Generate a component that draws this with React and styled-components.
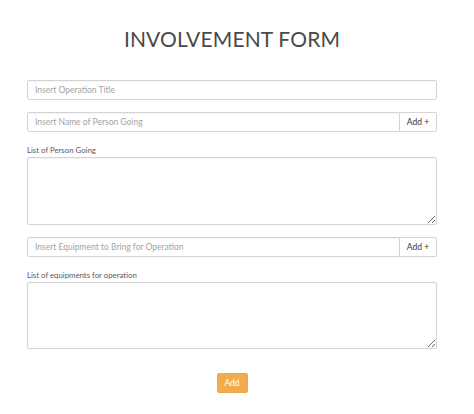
import React from "react";
import styled, { createGlobalStyle } from "styled-components";

const GlobalStyle = createGlobalStyle`
  body {
    margin: 0;
    background: #ffffff;
    font-family: Lato, "Open Sans", sans-serif;
  }
`;

const Page = styled.div`
  width: 410px;
  padding: 0 37px 0 27px;
  display: flex;
  flex-direction: column;
`;

const Title = styled.h1`
  margin: 26px 0 28px;
  text-align: center;
  font-family: Lato, sans-serif;
  font-weight: 400;
  font-size: 21px;
  line-height: 26px;
  color: #4a4a4a;
  letter-spacing: 0.15px;
`;

const Field = styled.input`
  box-sizing: border-box;
  width: 100%;
  height: 20px;
  padding: 0 7px;
  border: 1px solid #d4d4d4;
  border-radius: 2px;
  font-family: Lato, sans-serif;
  font-size: 8.5px;
  color: #555;
  outline: none;
  box-shadow: inset 0 1px 1px rgba(0, 0, 0, 0.04);

  &::placeholder {
    color: #a3a3a3;
  }
`;

const Group = styled.div`
  display: flex;
  margin-top: ${p => p.$top || 0}px;
`;

const GroupField = styled(Field)`
  flex: 1;
  min-width: 0;
  border-radius: 2px 0 0 2px;
`;

const AddonButton = styled.button`
  box-sizing: border-box;
  height: 20px;
  width: 37px;
  padding: 0;
  border: 1px solid #d4d4d4;
  border-left: none;
  border-radius: 0 2px 2px 0;
  background: #ffffff;
  font-family: Lato, sans-serif;
  font-size: 8.5px;
  color: #333;
`;

const Label = styled.label`
  display: block;
  margin: 13px 0 2px;
  font-family: Lato, sans-serif;
  font-size: 7.8px;
  line-height: 10px;
  color: #5a5a5a;
`;

const Area = styled.textarea`
  box-sizing: border-box;
  width: 100%;
  height: 67.5px;
  margin: 0;
  display: block;
  border: 1px solid #d4d4d4;
  border-radius: 2px;
  outline: none;
  font-family: Lato, sans-serif;
  font-size: 8.5px;
  box-shadow: inset 0 1px 1px rgba(0, 0, 0, 0.04);
`;

const SubmitRow = styled.div`
  display: flex;
  justify-content: center;
  margin-top: 24px;
`;

const SubmitButton = styled.button`
  height: 20px;
  width: 31px;
  padding: 0;
  border: 1px solid #eea847;
  border-radius: 2px;
  background: #f0ad4e;
  color: #ffffff;
  font-family: Lato, sans-serif;
  font-size: 8.5px;
`;

export default function App() {
  return (
    <>
      <GlobalStyle />
      <Page>
        <Title>INVOLVEMENT FORM</Title>
        <Field placeholder="Insert Operation Title" />
        <Group $top={12}>
          <GroupField placeholder="Insert Name of Person Going" />
          <AddonButton>Add +</AddonButton>
        </Group>
        <Label>List of Person Going</Label>
        <Area />
        <Group $top={12}>
          <GroupField placeholder="Insert Equipment to Bring for Operation" />
          <AddonButton>Add +</AddonButton>
        </Group>
        <Label>List of equipments for operation</Label>
        <Area />
        <SubmitRow>
          <SubmitButton>Add</SubmitButton>
        </SubmitRow>
      </Page>
    </>
  );
}
